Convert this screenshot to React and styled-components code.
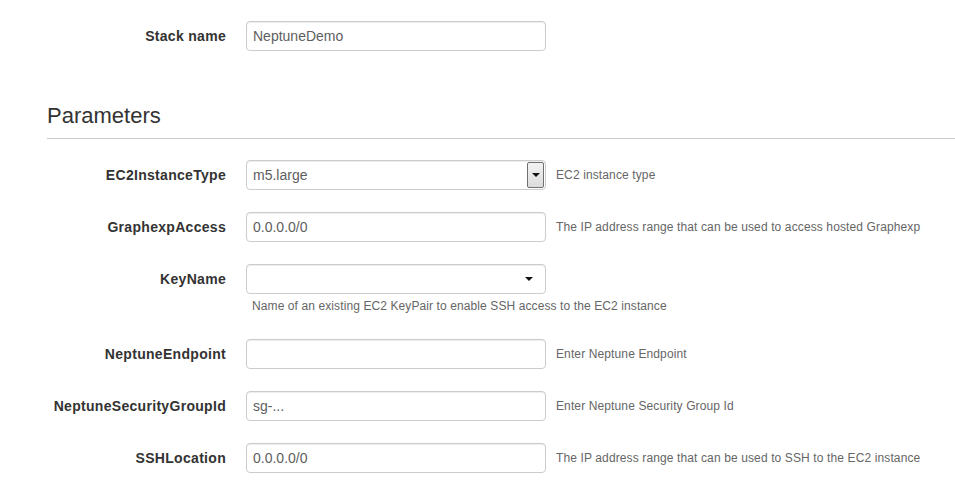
import React from "react";
import styled, { createGlobalStyle } from "styled-components";

const GlobalStyle = createGlobalStyle`
  body {
    margin: 0;
    background: #fff;
    font-family: "Liberation Sans", Arial, sans-serif;
    color: #333;
  }
`;

const Page = styled.div`
  padding: 21px 0 0 47px;
  width: 908px;
`;

const Row = styled.div`
  display: grid;
  grid-template-columns: 179px 300px 1fr;
  column-gap: 20px;
  align-items: start;
  margin-bottom: 22px;
`;

const Label = styled.label`
  font-size: 14px;
  font-weight: bold;
  color: #333;
  text-align: right;
  line-height: 30px;
  letter-spacing: 0.3px;
  white-space: nowrap;
`;

const Field = styled.div`
  display: flex;
  flex-direction: column;
`;

const Input = styled.div`
  box-sizing: border-box;
  height: 30px;
  width: 300px;
  border: 1px solid #ccc;
  border-radius: 4px;
  box-shadow: inset 0 1px 1px rgba(0, 0, 0, 0.075);
  background: #fff;
  display: flex;
  align-items: center;
  padding: 0 1px 0 6px;
  font-size: 14px;
  color: #5e5e5e;
`;

const Value = styled.span`
  flex: 1;
`;

const NativeButton = styled.div`
  box-sizing: border-box;
  width: 17px;
  height: 26px;
  border: 1px solid #707070;
  border-radius: 2px;
  background: linear-gradient(#f2f2f2, #dcdcdc);
  display: flex;
  align-items: center;
  justify-content: center;
`;

const Caret = styled.span`
  width: 0;
  height: 0;
  border-left: 4px solid transparent;
  border-right: 4px solid transparent;
  border-top: 4px solid #111;
  margin-right: ${({ $gap }) => $gap || 0}px;
`;

const Help = styled.div`
  font-size: 12px;
  color: #666;
  line-height: 30px;
  letter-spacing: 0.12px;
  margin-left: -10px;
  white-space: nowrap;
`;

const BelowHelp = styled.div`
  font-size: 12px;
  color: #666;
  line-height: 21px;
  letter-spacing: 0.1px;
  padding: 2px 0 0 6px;
  white-space: nowrap;
`;

const Heading = styled.h3`
  margin: 53px 0 21px;
  font-size: 22px;
  font-weight: 500;
  line-height: 24px;
  color: #333;
  padding-bottom: 10px;
  border-bottom: 1px solid #ccc;
`;

const params = [
  { name: "EC2InstanceType", value: "m5.large", kind: "native", help: "EC2 instance type" },
  {
    name: "GraphexpAccess",
    value: "0.0.0.0/0",
    help: "The IP address range that can be used to access hosted Graphexp",
  },
  {
    name: "KeyName",
    value: "",
    kind: "select",
    below: "Name of an existing EC2 KeyPair to enable SSH access to the EC2 instance",
  },
  { name: "NeptuneEndpoint", value: "", help: "Enter Neptune Endpoint" },
  { name: "NeptuneSecurityGroupId", value: "sg-...", help: "Enter Neptune Security Group Id" },
  {
    name: "SSHLocation",
    value: "0.0.0.0/0",
    help: "The IP address range that can be used to SSH to the EC2 instance",
  },
];

const App = () => {
  return (
    <Page>
      <GlobalStyle />
      <Row>
        <Label>Stack name</Label>
        <Input>
          <Value>NeptuneDemo</Value>
        </Input>
      </Row>

      <Heading>Parameters</Heading>

      {params.map((p) => (
        <Row key={p.name}>
          <Label>{p.name}</Label>
          <Field>
            <Input>
              <Value>{p.value}</Value>
              {p.kind === "native" && (
                <NativeButton>
                  <Caret />
                </NativeButton>
              )}
              {p.kind === "select" && <Caret $gap={11} />}
            </Input>
            {p.below && <BelowHelp>{p.below}</BelowHelp>}
          </Field>
          {p.help && <Help>{p.help}</Help>}
        </Row>
      ))}
    </Page>
  );
};

export default App;
